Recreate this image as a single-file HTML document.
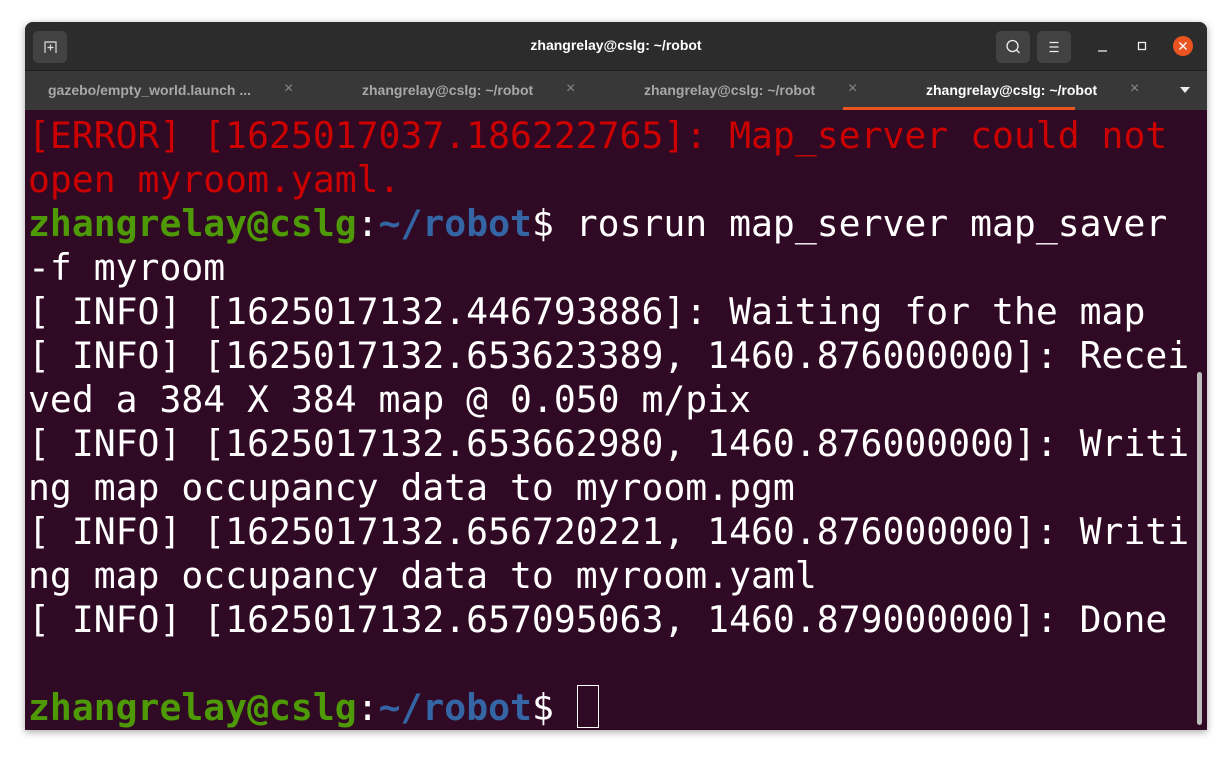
<!DOCTYPE html>
<html><head><meta charset="utf-8"><style>
body{margin:0;width:1232px;height:758px;background:#fff;position:relative;overflow:hidden;font-family:"Liberation Sans",sans-serif}
.win{position:absolute;left:25px;top:22px;width:1182px;height:708px;border-radius:8px 8px 0 0;overflow:hidden;background:#300a24;box-shadow:0 2px 8px rgba(0,0,0,.35)}
.title{position:absolute;left:0;top:0;width:100%;height:48px;background:#2c2c2c;border-bottom:1px solid #1f1f1f}
.ttl{position:absolute;left:0;width:100%;top:15px;text-align:center;color:#fff;font-weight:bold;font-size:14px}
.btn{position:absolute;top:9px;width:34px;height:32px;background:#424242;border-radius:5px}
.tabs{position:absolute;left:0;top:49px;width:100%;height:39px;background:#383838}
.tab{position:absolute;top:11px;font-size:14px;font-weight:bold;color:#a8a8a8}
.x{position:absolute;top:9px;color:#8a8a8a;font-size:16px}
.term{position:absolute;left:3px;top:92px;font-family:"DejaVu Sans Mono","Liberation Mono",monospace;font-size:36.4px;line-height:44px;color:#fff;white-space:pre}
.r{color:#cc0000}.g{color:#4e9a06;font-weight:bold}.b{color:#3465a4;font-weight:bold}
</style></head><body>
<div class="win">
 <div class="title">
  <div class="btn" style="left:8px"><svg width="34" height="32"><path d="M12 22V11h11v11M17.5 13.5v6M14.5 16.5h6" stroke="#ddd" stroke-width="1.2" fill="none"/></svg></div>
  <div class="ttl">zhangrelay@cslg: ~/robot</div>
  <div class="btn" style="left:971px"><svg width="34" height="32"><circle cx="16.5" cy="15" r="5.5" stroke="#eee" stroke-width="1.3" fill="none"/><path d="M20.5 19l3 3" stroke="#eee" stroke-width="1.3"/></svg></div>
  <div class="btn" style="left:1012px"><svg width="34" height="32"><path d="M12.5 11.5h9M12.5 16h9M12.5 20.5h9" stroke="#eee" stroke-width="1.2"/></svg></div>
  <svg style="position:absolute;left:1068px;top:15px" width="20" height="20"><path d="M5 14h9" stroke="#eee" stroke-width="1.3"/></svg>
  <svg style="position:absolute;left:1108px;top:15px" width="20" height="20"><rect x="5.5" y="5.5" width="7" height="7" stroke="#eee" stroke-width="1.3" fill="none"/></svg>
  <div style="position:absolute;left:1148px;top:14px;width:20px;height:20px;border-radius:50%;background:#e95420"><svg width="20" height="20"><path d="M6.5 6.5l7 7M13.5 6.5l-7 7" stroke="#fff" stroke-width="1.4"/></svg></div>
 </div>
 <div class="tabs">
  <div class="tab" style="left:23px">gazebo/empty_world.launch ...</div><div class="x" style="left:259px">×</div>
  <div class="tab" style="left:337px">zhangrelay@cslg: ~/robot</div><div class="x" style="left:541px">×</div>
  <div class="tab" style="left:619px">zhangrelay@cslg: ~/robot</div><div class="x" style="left:823px">×</div>
  <div class="tab" style="left:901px;color:#fff">zhangrelay@cslg: ~/robot</div><div class="x" style="left:1105px">×</div>
  <div style="position:absolute;left:818px;top:36px;width:232px;height:3px;background:#e95420"></div>
  <svg style="position:absolute;left:1154px;top:15px" width="12" height="8"><path d="M1 1h10L6 7z" fill="#eee"/></svg>
 </div>
 <div class="term"><span class="r">[ERROR] [1625017037.186222765]: Map_server could not
open myroom.yaml.</span>
<span class="g">zhangrelay@cslg</span>:<span class="b">~/robot</span>$ rosrun map_server map_saver
-f myroom
[ INFO] [1625017132.446793886]: Waiting for the map
[ INFO] [1625017132.653623389, 1460.876000000]: Recei
ved a 384 X 384 map @ 0.050 m/pix
[ INFO] [1625017132.653662980, 1460.876000000]: Writi
ng map occupancy data to myroom.pgm
[ INFO] [1625017132.656720221, 1460.876000000]: Writi
ng map occupancy data to myroom.yaml
[ INFO] [1625017132.657095063, 1460.879000000]: Done

<span class="g">zhangrelay@cslg</span>:<span class="b">~/robot</span>$ </div>
 <div style="position:absolute;left:552px;top:663px;width:20px;height:41px;border:1.5px solid #fff"></div>
 <div style="position:absolute;left:1172px;top:350px;width:5px;height:353px;background:#bdbdbd;border-radius:3px"></div>
</div>
</body></html>
